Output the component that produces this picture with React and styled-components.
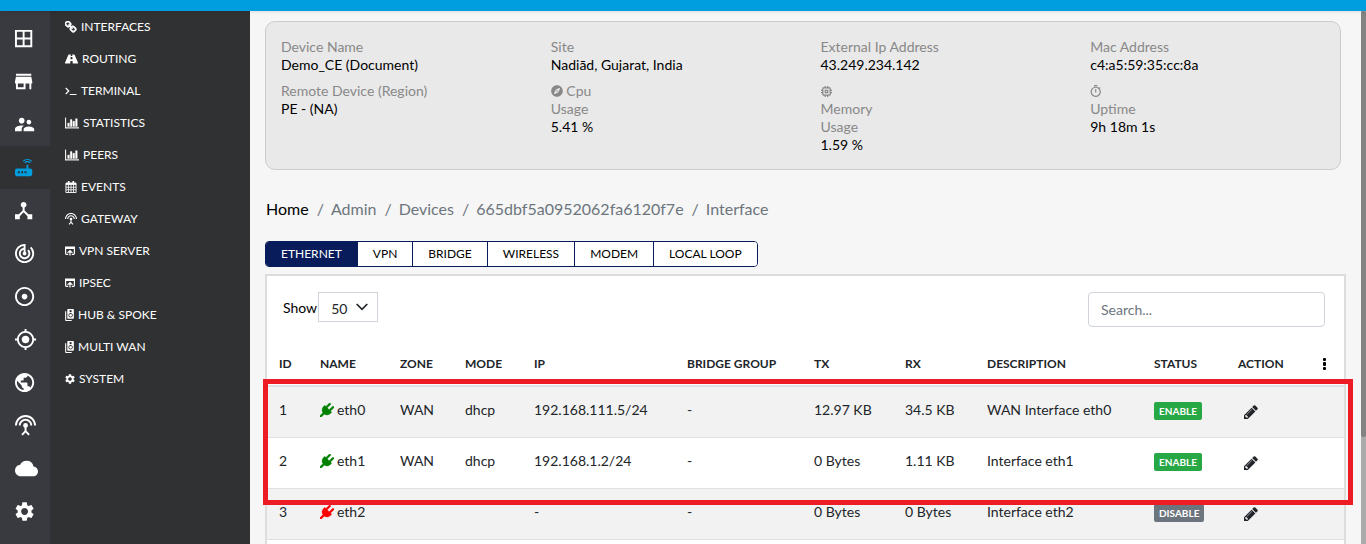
import React from "react";
import styled, { createGlobalStyle } from "styled-components";
import {
  MdStore,
  MdSupervisorAccount,
  MdRouter,
  MdDeviceHub,
  MdTrackChanges,
  MdAdjust,
  MdMyLocation,
  MdPublic,
  MdSettingsInputAntenna,
  MdCloud,
  MdSettings,
  MdSpeakerGroup,
  MdMemory,
  MdOutlineTimer
} from "react-icons/md";
import { FaCompass } from "react-icons/fa";

const WindowIcon = props => (
  <svg viewBox="0 0 24 24" fill="none" stroke="currentColor" {...props}>
    <path d="M4 4h16v16H4zM12 4v16M4 12h16" strokeWidth="2" />
  </svg>
);

const LinkIcon = props => (
  <svg viewBox="64 64 1664 1664" fill="currentColor" stroke="currentColor" {...props}>
    <path
      strokeWidth="80"
      d="M1456 1216q0-40-28-68l-208-208q-28-28-68-28-42 0-72 32 3 3 19 18.500t21.500 21.500 15 19 13 25.500 3.500 27.500q0 40-28 68t-68 28q-15 0-27.500-3.500t-25.500-13-19-15-21.500-21.500-18.500-19q-33 31-33 73 0 40 28 68l206 207q27 27 68 27 40 0 68-26l147-146q28-28 28-67zm-703-705q0-40-28-68l-206-207q-28-28-68-28-39 0-68 27l-147 146q-28 28-28 67 0 40 28 68l208 208q27 27 68 27 42 0 72-31-3-3-19-18.500t-21.500-21.500-15-19-13-25.500-3.500-27.500q0-40 28-68t68-28q15 0 27.500 3.500t25.500 13 19 15 21.500 21.500 18.500 19q33-31 33-73zm895 705q0 120-85 203l-147 146q-83 83-203 83-121 0-204-85l-206-207q-83-83-83-203 0-123 88-209l-88-88q-86 88-208 88-120 0-204-84l-208-208q-84-84-84-204t85-203l147-146q83-83 203-83 121 0 204 85l206 207q83 83 83 203 0 123-88 209l88 88q86-88 208-88 120 0 204 84l208 208q84 84 84 204z"
    />
  </svg>
);

const RoadIcon = props => (
  <svg viewBox="0 0 26 18" fill="currentColor" {...props}>
    <path
      fillRule="evenodd"
      d="M8 0h3.600l-.3 3h3.400l-.3-3H18c.7 0 1.100.4 1.400 1L26 16.500c.2.800 0 1.500-.9 1.500h-9.600l-.4-5h-4.200l-.4 5H.9C0 18-.2 17.300 0 16.500L6.600 1C6.900.4 7.300 0 8 0zM11.200 5l-.3 4.500h4.200L14.800 5z"
    />
  </svg>
);

const TerminalIcon = props => (
  <svg viewBox="0 0 24 18" fill="none" stroke="currentColor" {...props}>
    <path d="M1.500 3l6 6-6 6M9.500 16H23" strokeWidth="2.400" />
  </svg>
);

const ChartIcon = props => (
  <svg viewBox="0 128 2048 1536" fill="currentColor" {...props}>
    <path
      stroke="currentColor"
      strokeWidth="50"
      d="M640 896v512h-256v-512h256zm384-512v1024h-256v-1024h256zm1024 1152v128h-2048v-1536h128v1408h1920zm-640-896v768h-256v-768h256zm384-384v1152h-256v-1152h256z"
    />
  </svg>
);

const CalendarIcon = props => (
  <svg viewBox="0 0 24 26" fill="none" stroke="currentColor" {...props}>
    <path d="M1 5h22v20H1z" strokeWidth="2" />
    <path d="M1 6h22" strokeWidth="5" />
    <path d="M1 13.500h22M1 19h22M6.500 8v17M12 8v17M17.500 8v17" strokeWidth="1.800" />
    <path d="M7 0v6M17 0v6" strokeWidth="3.500" />
  </svg>
);

const UploadIcon = props => (
  <svg viewBox="0 0 20 20" fill="none" stroke="currentColor" {...props}>
    <path d="M6.500 16.800H3A1.800 1.800 0 0 1 1.200 15V4h17.600v11a1.800 1.800 0 0 1-1.800 1.800h-3.500" strokeWidth="2.400" />
    <path d="M1 3.500h18" strokeWidth="5" strokeLinecap="round" />
    <path d="M10 19v-8M6.500 12.500h7L10 9z" strokeWidth="2.400" />
  </svg>
);

const PlugIcon = props => (
  <svg viewBox="0 0 1792 1792" fill="currentColor" {...props}>
    <path
      stroke="currentColor"
      strokeWidth="40"
      d="M1755 453q37 38 37 90.500t-37 90.500l-401 400 150 150-160 160q-163 163-389.500 186.500t-411.500-100.500l-362 362h-181v-181l362-362q-124-185-100.500-411.500t186.500-389.500l160-160 150 150 400-401q38-37 91-37t90 37 37 90.500-37 90.500l-400 401 234 234 401-400q38-37 91-37t90 37z"
    />
  </svg>
);

const PencilIcon = props => (
  <svg viewBox="128 128 1536 1536" fill="currentColor" {...props}>
    <path d="M491 1536l91-91-235-235-91 91v107h128v128h107zm523-928q0-22-22-22-10 0-17 7l-542 542q-7 7-7 17 0 22 22 22 10 0 17-7l542-542q7-7 7-17zm-54-192l416 416-832 832h-416v-416zm683 96q0 53-37 90l-166 166-416-416 166-165q36-38 90-38 53 0 91 38l235 234q37 39 37 91z" />
  </svg>
);

const DotsIcon = props => (
  <svg viewBox="0 0 4 12" fill="currentColor" {...props}>
    <rect width="3" height="3" rx="1" />
    <rect y="4" width="3" height="4" rx="1" />
    <rect y="9" width="3" height="3" rx="1" />
  </svg>
);

// viewBox trims the blank left side of each glyph so they line up
const railItems = [
  { label: "Dashboard", icon: WindowIcon, box: "3 0 24 24" },
  { label: "Sites", icon: MdStore, box: "3 0 24 24" },
  { label: "Users", icon: MdSupervisorAccount, box: "2 0 24 24" },
  { label: "Devices", icon: MdRouter, box: "3 0 24 24", active: true },
  { label: "Topology", icon: MdDeviceHub, box: "3 0 24 24" },
  { label: "Tracking", icon: MdTrackChanges, box: "2 0 24 24" },
  { label: "Targets", icon: MdAdjust, box: "2 0 24 24" },
  { label: "Location", icon: MdMyLocation, box: "1 0 24 24" },
  { label: "Network", icon: MdPublic, box: "2 0 24 24" },
  { label: "Gateways", icon: MdSettingsInputAntenna, box: "1 0 24 24" },
  { label: "Cloud", icon: MdCloud, box: "0 0 24 24" },
  { label: "Settings", icon: MdSettings, box: "2 0 24 24" }
];

const menuItems = [
  { label: "INTERFACES", icon: LinkIcon, width: 12 },
  { label: "ROUTING", icon: RoadIcon, width: 13 },
  { label: "TERMINAL", icon: TerminalIcon, width: 12 },
  { label: "STATISTICS", icon: ChartIcon, width: 14 },
  { label: "PEERS", icon: ChartIcon, width: 14 },
  { label: "EVENTS", icon: CalendarIcon, width: 12 },
  { label: "GATEWAY", icon: MdSettingsInputAntenna, width: 12, box: "1 1 22 22" },
  { label: "VPN SERVER", icon: UploadIcon, width: 10 },
  { label: "IPSEC", icon: UploadIcon, width: 10 },
  { label: "HUB & SPOKE", icon: MdSpeakerGroup, width: 9, box: "4 1 16 22" },
  { label: "MULTI WAN", icon: MdSpeakerGroup, width: 9, box: "4 1 16 22" },
  { label: "SYSTEM", icon: MdSettings, width: 10, box: "2 2 20 20" }
];

const crumbs = ["Home", "Admin", "Devices", "665dbf5a0952062fa6120f7e", "Interface"];

const tabs = ["ETHERNET", "VPN", "BRIDGE", "WIRELESS", "MODEM", "LOCAL LOOP"];

const columns = [
  { name: "ID", width: 41 },
  { name: "NAME", width: 80 },
  { name: "ZONE", width: 65 },
  { name: "MODE", width: 69 },
  { name: "IP", width: 153 },
  { name: "BRIDGE GROUP", width: 127 },
  { name: "TX", width: 91 },
  { name: "RX", width: 82 },
  { name: "DESCRIPTION", width: 167 },
  { name: "STATUS", width: 84 },
  { name: "ACTION", width: 79 }
];

const rows = [
  {
    id: 1,
    name: "eth0",
    zone: "WAN",
    mode: "dhcp",
    ip: "192.168.111.5/24",
    tx: "12.97 KB",
    rx: "34.5 KB",
    description: "WAN Interface eth0",
    up: true
  },
  {
    id: 2,
    name: "eth1",
    zone: "WAN",
    mode: "dhcp",
    ip: "192.168.1.2/24",
    tx: "0 Bytes",
    rx: "1.11 KB",
    description: "Interface eth1",
    up: true
  },
  {
    id: 3,
    name: "eth2",
    zone: "",
    mode: "",
    ip: "-",
    tx: "0 Bytes",
    rx: "0 Bytes",
    description: "Interface eth2",
    up: false
  }
];

const App = () => (
  <Page>
    <GlobalStyle />
    <TopBar />
    <Body>
      <Rail aria-label="Main">
        {railItems.map(({ label, icon: Icon, box, active }) => (
          <RailLink href="#" key={label} aria-label={label} $active={active}>
            <Icon viewBox={box} />
          </RailLink>
        ))}
      </Rail>
      <Menu aria-label="Device">
        {menuItems.map(({ label, icon: Icon, width, box }) => (
          <MenuLink href="#" key={label} $icon={width}>
            <Icon {...(box ? { viewBox: box } : {})} />
            {label}
          </MenuLink>
        ))}
      </Menu>
      <Main>
        <DeviceCard>
          <Stack>
            <Field label="Device Name" value="Demo_CE (Document)" />
            <Field label="Remote Device (Region)" value="PE - (NA)" />
          </Stack>
          <Stack>
            <Field label="Site" value="Nadiād, Gujarat, India" />
            <Field narrow icon={<FaCompass size={12} />} label="Cpu Usage" value="5.41 %" />
          </Stack>
          <Stack>
            <Field label="External Ip Address" value="43.249.234.142" />
            <Field
              narrow
              icon={<MdMemory size={11} viewBox="3 3 18 18" />}
              label="Memory Usage"
              value="1.59 %"
            />
          </Stack>
          <Stack>
            <Field label="Mac Address" value="c4:a5:59:35:cc:8a" />
            <Field
              narrow
              icon={<MdOutlineTimer size={12} viewBox="2 1 21 21" />}
              label="Uptime"
              value="9h 18m 1s"
            />
          </Stack>
        </DeviceCard>

        <Breadcrumb aria-label="Breadcrumb">
          {crumbs.map((crumb, i) => (
            <Crumb key={crumb}>
              {i === 0 ? <a href="#">{crumb}</a> : crumb}
            </Crumb>
          ))}
        </Breadcrumb>

        <Tabs>
          {tabs.map((tab, i) => (
            <Tab type="button" key={tab} $active={i === 0}>
              {tab}
            </Tab>
          ))}
        </Tabs>

        <TableCard>
          <Toolbar>
            <ShowLabel>
              <span>Show</span>
              <SelectWrapper>
                <Select defaultValue="50">
                  <option>10</option>
                  <option>50</option>
                  <option>100</option>
                </Select>
                <svg viewBox="0 0 12 8" width="12" height="8" aria-hidden="true">
                  <path d="M.7 1l5.300 5.300L11.300 1" fill="none" stroke="#212529" strokeWidth="1.700" />
                </svg>
              </SelectWrapper>
            </ShowLabel>
            <Search type="text" placeholder="Search..." aria-label="Search" />
          </Toolbar>
          <TableWrapper>
            <Table>
              <colgroup>
                {columns.map(col => (
                  <Col key={col.name} $width={col.width} />
                ))}
                <Col $width={39} />
              </colgroup>
              <thead>
                <tr>
                  {columns.map(col => (
                    <Th key={col.name}>{col.name}</Th>
                  ))}
                  <Th $tight>
                    <MoreButton type="button" aria-label="Columns">
                      <DotsIcon width="4" height="12" />
                    </MoreButton>
                  </Th>
                </tr>
              </thead>
              <tbody>
                {rows.map(row => (
                  <Row key={row.id}>
                    <Td>{row.id}</Td>
                    <Td>
                      <Name $up={row.up}>
                        <PlugIcon />
                        {row.name}
                      </Name>
                    </Td>
                    <Td>{row.zone}</Td>
                    <Td>{row.mode}</Td>
                    <Td>{row.ip}</Td>
                    <Td>-</Td>
                    <Td>{row.tx}</Td>
                    <Td>{row.rx}</Td>
                    <Td>{row.description}</Td>
                    <Td>
                      <Badge $up={row.up}>{row.up ? "ENABLE" : "DISABLE"}</Badge>
                    </Td>
                    <Td>
                      <EditButton type="button" aria-label={`Edit ${row.name}`}>
                        <PencilIcon width="14" height="14" />
                      </EditButton>
                    </Td>
                    <Td />
                  </Row>
                ))}
              </tbody>
            </Table>
            <Highlight />
          </TableWrapper>
        </TableCard>
      </Main>
      <ScrollTrack>
        <ScrollThumb />
      </ScrollTrack>
    </Body>
  </Page>
);

const Field = ({ icon, label, value, narrow }) => (
  <div>
    <FieldLabel $narrow={narrow}>
      {icon} {label}
    </FieldLabel>
    <FieldValue>{value}</FieldValue>
  </div>
);

const GlobalStyle = createGlobalStyle`
  * {
    box-sizing: border-box;
  }
  body {
    margin: 0;
    background: #f6f6f6;
    color: #212529;
    font-family: Lato, "Open Sans", sans-serif;
    font-size: 14px;
    line-height: 18px;
  }
  button, input, select {
    font-family: inherit;
  }
`;

const Page = styled.div`
  display: flex;
  flex-direction: column;
  height: 100vh;
  overflow: hidden;
`;
const TopBar = styled.header`
  flex: none;
  height: 11px;
  background: #009ddf;
  box-shadow: 0 1px 3px rgba(0, 0, 0, 0.1);
  z-index: 1;
`;
const Body = styled.div`
  display: flex;
  flex: 1;
  min-height: 0;
`;
const Rail = styled.nav`
  flex: none;
  width: 50px;
  padding-top: 6px;
  background: #393a40;
`;
const RailLink = styled.a`
  display: flex;
  align-items: center;
  height: 43px;
  padding-left: 15px;
  color: ${props => (props.$active ? "#009ddf" : "#fff")};
  background: ${props => (props.$active ? "#303133" : "transparent")};
  svg {
    width: 23px;
    height: 23px;
  }
`;
const Menu = styled.nav`
  flex: none;
  width: 200px;
  background: #303133;
`;
const MenuLink = styled.a`
  display: flex;
  align-items: center;
  gap: 4px;
  height: 32px;
  padding-left: 15px;
  color: #fff;
  font-size: 12px;
  text-decoration: none;
  svg {
    width: ${props => props.$icon}px;
    height: 12px;
  }
`;
const Main = styled.main`
  flex: 1;
  min-width: 0;
  padding: 10px 15px 0;
  overflow: hidden;
`;
const DeviceCard = styled.section`
  display: grid;
  grid-template-columns: repeat(4, 1fr);
  gap: 20px;
  margin-right: 5px;
  padding: 16px 0 15px 15px;
  background: #e9e9e9;
  border: 1px solid #ccc;
  border-radius: 10px;
`;
const Stack = styled.div`
  display: flex;
  flex-direction: column;
  gap: 8px;
`;
const FieldLabel = styled.div`
  width: ${props => (props.$narrow ? "56px" : "auto")};
  color: #888;
  svg {
    vertical-align: -1px;
  }
`;
const FieldValue = styled.div`
  color: #000;
`;
const Breadcrumb = styled.nav`
  display: flex;
  margin: 26px 0 20px;
  padding-left: 1px;
  font-size: 16px;
  line-height: 25px;
  color: #6c757d;
`;
const Crumb = styled.span`
  & + &::before {
    content: "/";
    padding: 0 7px 0 8px;
  }
  a {
    color: #000;
    text-decoration: none;
  }
`;
const Tabs = styled.div`
  display: inline-flex;
  border: 1px solid #081c5c;
  border-radius: 4px;
  overflow: hidden;
  vertical-align: top;
`;
const Tab = styled.button`
  height: 24px;
  padding: 0 15px 2px;
  border: 0;
  background: ${props => (props.$active ? "#081c5c" : "#fff")};
  color: ${props => (props.$active ? "#fff" : "#000")};
  font-size: 12px;
  & + & {
    border-left: 1px solid #081c5c;
  }
`;
const TableCard = styled.section`
  margin: 7px 0 40px;
  padding: 16px 0 40px;
  background: #fff;
  border: 2px solid #ddd;
`;
const Toolbar = styled.div`
  display: flex;
  justify-content: space-between;
  align-items: flex-start;
  padding: 0 19px 0 16px;
`;
const ShowLabel = styled.label`
  display: flex;
  align-items: center;
  gap: 1px;
  color: #000;
  & > span:first-child {
    padding-top: 2px;
  }
`;
const SelectWrapper = styled.span`
  display: grid;
  align-items: center;
  & > * {
    grid-area: 1 / 1;
  }
  svg {
    justify-self: end;
    margin-right: 10px;
    pointer-events: none;
  }
`;
const Select = styled.select`
  appearance: none;
  width: 60px;
  height: 30px;
  padding: 2px 12px 0;
  background: #fff;
  border: 1px solid #ced4da;
  border-radius: 0;
  color: #212529;
  font-size: 14px;
`;
const Search = styled.input`
  width: 237px;
  height: 35px;
  padding: 0 12px;
  border: 1px solid #ced4da;
  border-radius: 4px;
  font-size: 14px;
  &::placeholder {
    color: #6c757d;
  }
`;
const TableWrapper = styled.div`
  position: relative;
  margin-top: 14px;
`;
const Table = styled.table`
  width: 100%;
  table-layout: fixed;
  border-collapse: separate;
  border-spacing: 0;
`;
const Col = styled.col`
  width: ${props => props.$width}px;
`;
const Th = styled.th`
  height: 46px;
  padding: ${props => (props.$tight ? "2px 0 0" : "2px 12px 0")};
  border-bottom: 2px solid #dee2e6;
  font-size: 12px;
  font-weight: 700;
  text-align: ${props => (props.$tight ? "center" : "left")};
  white-space: nowrap;
`;
const Row = styled.tr`
  &:nth-child(odd) {
    background: #f2f2f2;
  }
`;
const Td = styled.td`
  height: 51px;
  padding: 0 12px 4px;
  border-bottom: 1px solid #dee2e6;
  white-space: nowrap;
`;
const Name = styled.span`
  display: flex;
  align-items: center;
  gap: 3px;
  svg {
    width: 14px;
    height: 14px;
    color: ${props => (props.$up ? "green" : "red")};
  }
`;
const Badge = styled.span`
  display: inline-block;
  padding: 0 5px;
  border-radius: 2px;
  background: ${props => (props.$up ? "#28a745" : "#6c757d")};
  color: #fff;
  font-size: 10px;
  font-weight: 700;
  vertical-align: middle;
`;
const IconButton = styled.button`
  display: flex;
  padding: 0;
  border: 0;
  background: none;
  color: #212529;
`;
const MoreButton = styled(IconButton)`
  margin: 0 auto;
  color: #000;
`;
const EditButton = styled(IconButton)`
  margin: 4px 0 0 6px;
`;
const Highlight = styled.div`
  position: absolute;
  top: 38px;
  left: -4px;
  right: -9px;
  height: 126px;
  border: 5px solid #ed1c24;
  pointer-events: none;
`;
const ScrollTrack = styled.div`
  flex: none;
  width: 5px;
  background: #aaa;
`;
const ScrollThumb = styled.div`
  height: 80%;
  border-radius: 3px;
  background: #828282;
`;

export default App;
